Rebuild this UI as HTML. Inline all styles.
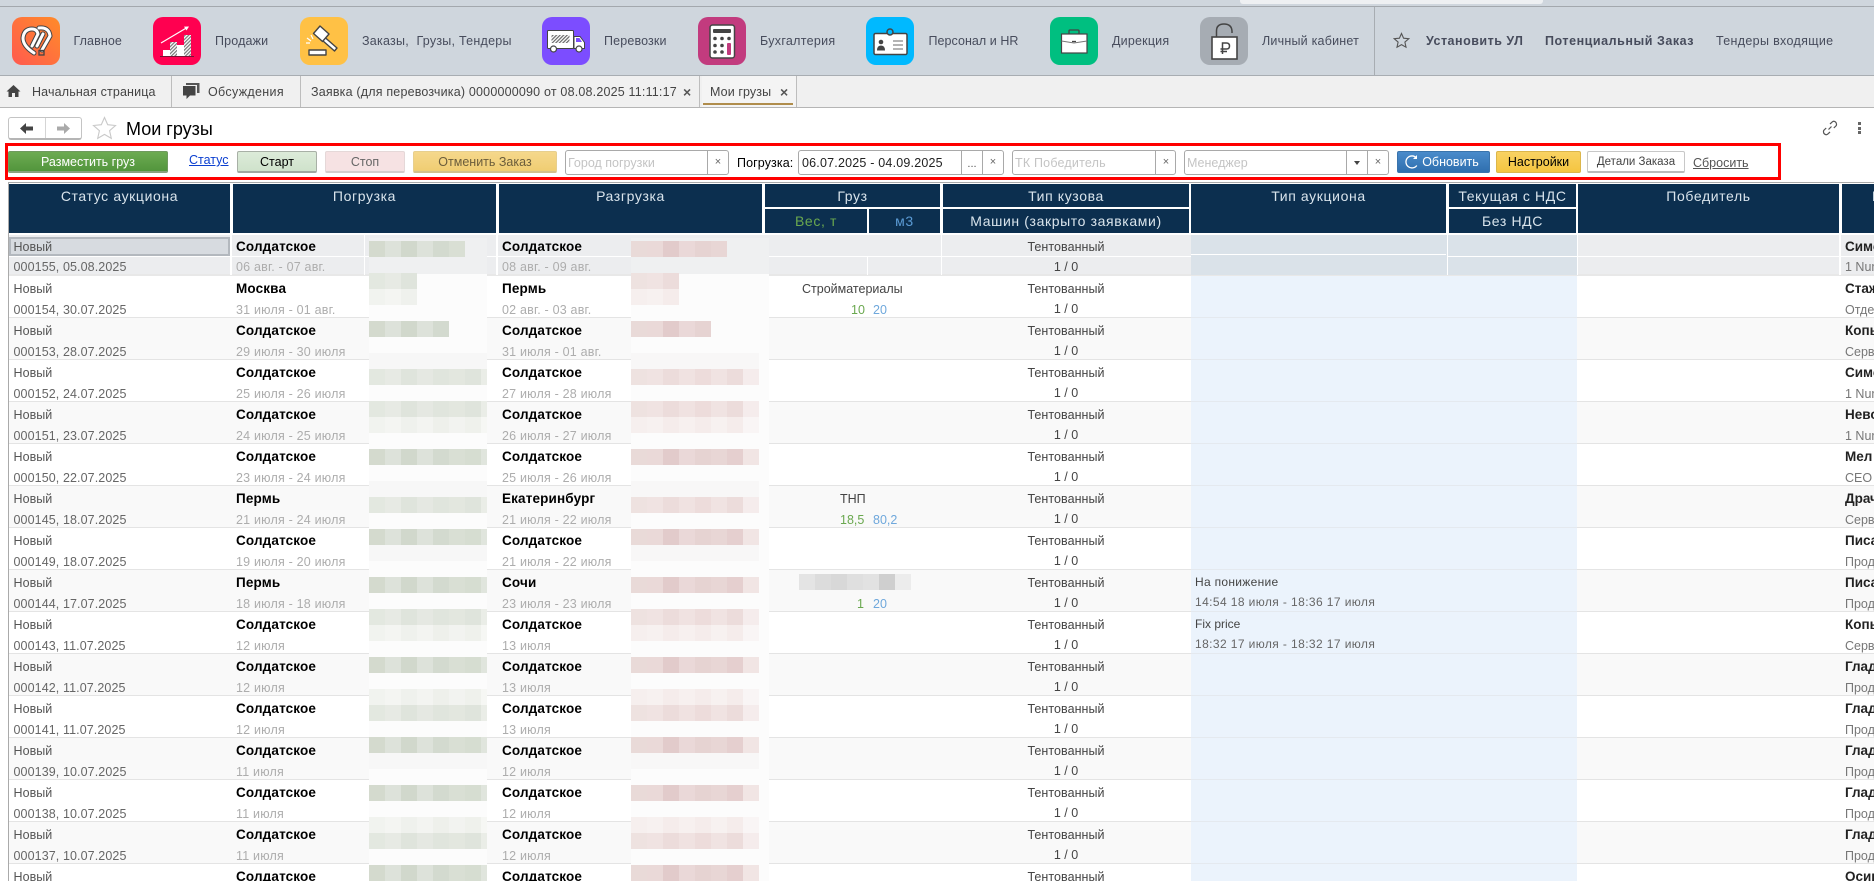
<!DOCTYPE html>
<html lang="ru"><head><meta charset="utf-8"><title>Мои грузы</title>
<style>
*{box-sizing:border-box}
html,body{margin:0;padding:0;width:1874px;height:881px;overflow:hidden;background:#fff;font-family:"Liberation Sans",Arial,sans-serif}
#app{position:relative;width:1874px;height:881px;overflow:hidden;background:#fff}
.a{position:absolute}
.t{position:absolute;white-space:nowrap}
#top{position:absolute;left:0;top:0;width:1874px;height:76px;background:#cfd6dd;border-bottom:1px solid #a8adb2}
#top:before{content:"";position:absolute;left:0;top:6px;width:1874px;height:1px;background:#a3a8ad}
.ic{position:absolute;top:17px;width:48px;height:48px}
.m{top:33px;font-size:12.5px;line-height:16px;color:#474c5c;letter-spacing:.05px}
#tabs{position:absolute;left:0;top:76px;width:1874px;height:32px;background:#f0f0f0;border-bottom:1px solid #b5b5b5}
.tb{top:84px;font-size:12.5px;line-height:16px;color:#444}
.dv{position:absolute;top:76px;width:1px;height:31px;background:#bdbdbd}
.btn{position:absolute;text-align:center;font-size:12.5px;height:22px;line-height:20px;border-radius:2px;white-space:nowrap}
.fld{position:absolute;top:150px;height:25px;border:1px solid #a9a9a9;border-radius:3px;background:#fff}
.ph{position:absolute;top:155px;font-size:12.5px;line-height:16px;color:#c4c4c4;white-space:nowrap}
.fd{position:absolute;top:150px;width:1px;height:25px;background:#a9a9a9}
.x{position:absolute;top:155px;font-size:11px;line-height:14px;color:#666;width:20px;text-align:center}
.h{position:absolute;background:#0c2f4f;color:#d9e4ec;font-size:14px;text-align:center;letter-spacing:.62px;padding-top:4px;line-height:16px;white-space:nowrap;overflow:hidden}
.r{position:absolute;left:9px;width:1865px;height:42px;background:#fff;border-bottom:1px solid #e4e4e4;overflow:hidden}
.g{background:#f9f9f9}
.r span{position:absolute;white-space:nowrap;font-size:12.5px;line-height:16px}
.s{left:4.500px;top:5px;color:#555;letter-spacing:.05px}
.n{left:4.500px;top:26px;color:#666;letter-spacing:.1px}
.p{left:227px;top:5px;font-weight:bold;color:#000;font-size:13.5px!important;letter-spacing:.15px}
.pd{left:227px;top:26px;color:#adadad;letter-spacing:.2px}
.u{left:493px;top:5px;font-weight:bold;color:#000;font-size:13.5px!important;letter-spacing:.15px}
.ud{left:493px;top:26px;color:#adadad;letter-spacing:.2px}
.k{left:934px;width:246px;top:5px;text-align:center;color:#444;letter-spacing:.05px}
.c{left:934px;width:246px;top:25px;text-align:center;color:#444}
.w{left:1836px;top:5px;font-weight:bold;color:#222;font-size:13.5px!important}
.j{left:1836px;top:26px;color:#777}
#blue{position:absolute;left:1191px;top:276px;width:386px;height:605px;background:repeating-linear-gradient(180deg,#ebf3fc 0 41px,#e4e9ef 41px 42px)}
.col{position:absolute;top:238px;height:643px}
.b1,.b2,.b3,.b4,.q1,.q2,.q3,.q4{position:absolute;height:16px;left:0}
.b1{width:118px;background:linear-gradient(90deg,#d4dace 0 16px,#dde2da 16px 32px,#d1d8cc 32px 48px,#dde2da 48px 64px,#d3dacf 64px 80px,#d9dfd4 80px 96px,#d6ddd1 96px 112px,#e0e5dd 112px)}
.b2{width:118px;background:linear-gradient(90deg,#e3e8e0 0 16px,#e7eae4 16px 32px,#dfe4dc 32px 48px,#e5e8e2 48px 64px,#e0e5dd 64px 80px,#e3e7df 80px 96px,#dfe4dc 96px 112px,#eaede7 112px)}
.b3{width:118px;background:linear-gradient(90deg,#f1f3ef 0 16px,#f4f5f2 16px 32px,#eff1ed 32px 48px,#f3f4f1 48px 64px,#eef0eb 64px 80px,#f2f3f0 80px 96px,#eff1ec 96px 112px,#f6f7f4 112px)}
.b4{width:118px;background:#f7f7f7}
.q1{width:128px;background:linear-gradient(90deg,#e9dad8 0 16px,#ead9d8 16px 32px,#e2cbcb 32px 48px,#ead8d8 48px 64px,#e6d3d2 64px 80px,#e8d6d5 80px 96px,#e5cfcf 96px 112px,#f1e5e4 112px)}
.q2{width:128px;background:linear-gradient(90deg,#eee2e0 0 16px,#f0e3e2 16px 32px,#ecdcdb 32px 48px,#f0e2e1 48px 64px,#eddcdb 64px 80px,#f0e3e2 80px 96px,#ecdcdb 96px 112px,#f5ecec 112px)}
.q3{width:128px;background:linear-gradient(90deg,#f6efee 0 16px,#f7f1f0 16px 32px,#f5eceb 32px 48px,#f7f0ef 48px 64px,#f5eceb 64px 80px,#f7f1f0 80px 96px,#f5eceb 96px 112px,#f9f5f5 112px)}
.q4{width:128px;background:#f8f7f7}
</style></head><body><div id="app">

<div id="top"></div>
<div class="a" style="left:1240px;top:0;width:303px;height:4px;background:#eef0f2;border-radius:0 0 3px 3px"></div>
<div class="a" style="left:1374px;top:7px;width:1px;height:68px;background:#a8adb2"></div>

<!-- 1 -->
<svg class="ic" style="left:12px" viewBox="0 0 48 48"><defs><linearGradient id="o" x1="1" y1="0" x2="0" y2="1"><stop offset="0" stop-color="#ff8b29"/><stop offset="1" stop-color="#ff5a4f"/></linearGradient></defs><rect width="48" height="48" rx="10" fill="url(#o)"/>
<g fill="none" stroke-linecap="round" stroke-linejoin="round"><path d="M22 36Q11 29 11 21Q12 12 20 12Q25 12 26 17L20 29" stroke="#444" stroke-width="5"/><path d="M27 11Q37 10 38 19L30 33M31 17 25 29" stroke="#444" stroke-width="5"/><path d="M22 36Q11 29 11 21Q12 12 20 12Q25 12 26 17L20 29" stroke="#fff" stroke-width="3"/><path d="M27 11Q37 10 38 19L30 33M31 17 25 29" stroke="#fff" stroke-width="3"/></g><rect x="27" y="33.500" width="5" height="4.500" fill="none" stroke="#444" stroke-width="1.300"/></svg>
<!-- 2 -->
<svg class="ic" style="left:153px" viewBox="0 0 48 48"><defs><pattern id="h1" width="2.500" height="2.500" patternUnits="userSpaceOnUse" patternTransform="rotate(45)"><rect width="2.500" height="2.500" fill="#fff"/><rect width="1.200" height="2.500" fill="#777"/></pattern></defs><rect width="48" height="48" rx="10" fill="#ff0050"/><rect x="10" y="33" width="7" height="6" fill="#fff"/><rect x="17" y="25" width="7" height="14" fill="url(#h1)"/><rect x="24" y="28" width="7" height="11" fill="#fff"/><rect x="31" y="18" width="7" height="21" fill="url(#h1)"/><path d="M7 39.500H41" stroke="#7a1234" stroke-width="1"/><path d="M8 26 35 10" stroke="#fff" stroke-width="1.200"/><path d="M36 9.500 31 9.600 33.500 13.500Z" fill="#fff"/></svg>
<!-- 3 -->
<svg class="ic" style="left:300px" viewBox="0 0 48 48"><rect width="48" height="48" rx="10" fill="#ffc145"/><g stroke="#444" stroke-width="1.400" stroke-linejoin="round"><path d="M21 17 37 31 34.500 34 18.500 20Z" fill="#fff"/><path d="M20 9 29 17 22.500 24.500 13.500 16.500Z" fill="#fff"/><rect x="9" y="33" width="17" height="5" fill="#fff"/></g><path d="M7 21 11 24M6 26H10M11 18 13 22" stroke="#fff" stroke-width="1.200"/></svg>
<!-- 4 -->
<svg class="ic" style="left:542px" viewBox="0 0 48 48"><defs><pattern id="h2" width="2.500" height="2.500" patternUnits="userSpaceOnUse" patternTransform="rotate(45)"><rect width="2.500" height="2.500" fill="#fff"/><rect width="1.200" height="2.500" fill="#666"/></pattern></defs><rect width="48" height="48" rx="10" fill="#7c4dff"/><rect x="5.500" y="13.500" width="26" height="18" rx="1" fill="#fff" stroke="#444"/><rect x="9.500" y="18" width="18" height="8" fill="url(#h2)"/><path d="M32 31.500V19.500H38L42.500 25.500V31.500Z" fill="#fff" stroke="#444"/><path d="M34 21H37.500L40 25H34Z" fill="#7c4dff"/><circle cx="11.500" cy="32" r="3" fill="#fff" stroke="#444" stroke-width="1.200"/><circle cx="37" cy="32" r="3" fill="#fff" stroke="#444" stroke-width="1.200"/></svg>
<!-- 5 -->
<svg class="ic" style="left:698px" viewBox="0 0 48 48"><rect width="48" height="48" rx="10" fill="#c23b7e"/><rect x="12" y="8" width="24.500" height="33" rx="2.500" fill="#fff" stroke="#444" stroke-width="1.500"/><rect x="15" y="12" width="18" height="4" rx="1" fill="#444"/><g fill="#444"><circle cx="17" cy="21.500" r="1.800"/><circle cx="24" cy="21.500" r="1.800"/><circle cx="31" cy="21.500" r="1.800"/><circle cx="17" cy="28.500" r="1.800"/><circle cx="24" cy="28.500" r="1.800"/><circle cx="17" cy="35" r="1.800"/><circle cx="24" cy="35" r="1.800"/></g><rect x="29" y="26" width="4" height="12" rx="1" fill="#c23b7e"/></svg>
<!-- 6 -->
<svg class="ic" style="left:866px" viewBox="0 0 48 48"><rect width="48" height="48" rx="10" fill="#00b9ff"/><rect x="8" y="16.500" width="33" height="21" rx="1.500" fill="#fff" stroke="#444" stroke-width="1.500"/><circle cx="24" cy="15" r="3" fill="#00b9ff" stroke="#444" stroke-width="1.500"/><circle cx="15" cy="25" r="2.300" fill="#444"/><path d="M11 33.500Q11 28.500 15 28.500T19 33.500Z" fill="#444"/><path d="M27 24H37M27 28H37M27 32H37" stroke="#888" stroke-width="1.200"/></svg>
<!-- 7 -->
<svg class="ic" style="left:1050px" viewBox="0 0 48 48"><rect width="48" height="48" rx="10" fill="#00bf80"/><path d="M19 17V14Q19 13 20 13H28Q29 13 29 14V17" fill="none" stroke="#444" stroke-width="1.300"/><rect x="11.500" y="17" width="25.500" height="19" fill="#fff" stroke="#444" stroke-width="1.200"/><path d="M11.500 24 24 26 37 24" fill="none" stroke="#777"/><path d="M22 24.500H26" stroke="#444" stroke-width="1.300"/></svg>
<!-- 8 -->
<svg class="ic" style="left:1200px" viewBox="0 0 48 48"><rect width="48" height="48" rx="10" fill="#a6acb3"/><path d="M16.500 20V14Q16.500 7 24 7T32 14V16" fill="none" stroke="#444" stroke-width="1.500"/><rect x="12" y="20" width="25" height="22" fill="#fff" stroke="#444" stroke-width="1.600"/><path d="M22.500 37V26H26.500Q29.500 26 29.500 29T26.500 32H20.500M20.500 34.500H27" fill="none" stroke="#444" stroke-width="1.500"/></svg>

<div class="t m" style="left:73.500px;letter-spacing:.1px">Главное</div>
<div class="t m" style="left:215px;letter-spacing:.15px">Продажи</div>
<div class="t m" style="left:362px;letter-spacing:.25px">Заказы,&nbsp; Грузы, Тендеры</div>
<div class="t m" style="left:604px;letter-spacing:.15px">Перевозки</div>
<div class="t m" style="left:760px;letter-spacing:.3px">Бухгалтерия</div>
<div class="t m" style="left:928.500px;letter-spacing:.05px">Персонал и HR</div>
<div class="t m" style="left:1112px;letter-spacing:.2px">Дирекция</div>
<div class="t m" style="left:1262px;letter-spacing:.22px">Личный кабинет</div>
<svg class="a" style="left:1393px;top:32px" width="17" height="17" viewBox="0 0 17 17"><path d="M8.500 1.500 10.600 6.200 15.800 6.700 11.900 10.100 13 15.200 8.500 12.600 4 15.200 5.100 10.100 1.200 6.700 6.400 6.200Z" fill="none" stroke="#555" stroke-width="1.100"/></svg>
<div class="t m" style="left:1426px;font-weight:bold;letter-spacing:.5px">Установить УЛ</div>
<div class="t m" style="left:1545px;font-weight:bold;letter-spacing:.55px">Потенциальный Заказ</div>
<div class="t m" style="left:1716px;letter-spacing:.33px">Тендеры входящие</div>

<div id="tabs"></div>
<div class="a" style="left:702px;top:76px;width:94px;height:31px;background:#f4f4f4"></div>
<svg class="a" style="left:6px;top:84px" width="15" height="14" viewBox="0 0 15 14"><path d="M7.500 1 14.500 7.500H12.500V13H9V9H6V13H2.500V7.500H.5Z" fill="#444"/></svg>
<svg class="a" style="left:182px;top:83px" width="18" height="17" viewBox="0 0 18 17"><path d="M4 0H17.500V10H15V2H4Z" fill="#555"/><path d="M1 3H13.500V12.500H8L4.500 16V12.500H1Z" fill="#444"/></svg>
<div class="t tb" style="left:32px;letter-spacing:.15px">Начальная страница</div>
<div class="dv" style="left:171px"></div>
<div class="t tb" style="left:208px;letter-spacing:.33px">Обсуждения</div>
<div class="dv" style="left:300px"></div>
<div class="t tb" style="left:311px;letter-spacing:.19px">Заявка (для перевозчика) 0000000090 от 08.08.2025 11:11:17</div>
<div class="t tb" style="left:683px;font-weight:bold;font-size:14px;color:#555">×</div>
<div class="dv" style="left:699px"></div>
<div class="t tb" style="left:710px;letter-spacing:.1px">Мои грузы</div>
<div class="t tb" style="left:780px;font-weight:bold;font-size:14px;color:#555">×</div>
<div class="dv" style="left:796px"></div>
<div class="a" style="left:703px;top:103px;width:90px;height:2px;background:#b08d4c"></div>

<!-- title row -->
<div class="a" style="left:8px;top:117px;width:74px;height:23px;border:1px solid #c4c4c4;border-bottom:2px solid #b5b5b5;border-radius:3px;background:#fff"></div>
<div class="a" style="left:45px;top:118px;width:1px;height:20px;background:#d5d5d5"></div>
<svg class="a" style="left:19px;top:122px" width="15" height="13" viewBox="0 0 15 13"><path d="M1 6.500 7 1V4.500H14V8.500H7V12Z" fill="#444"/></svg>
<svg class="a" style="left:56px;top:122px" width="15" height="13" viewBox="0 0 15 13"><path d="M14 6.500 8 1V4.500H1V8.500H8V12Z" fill="#aaa"/></svg>
<svg class="a" style="left:92px;top:116px" width="25" height="24" viewBox="0 0 25 24"><path d="M12.500 1.500 15.700 8.700 23.500 9.500 17.600 14.700 19.300 22.400 12.500 18.400 5.700 22.400 7.400 14.700 1.500 9.500 9.300 8.700Z" fill="none" stroke="#c9c9c9" stroke-width="1.100"/></svg>
<div class="t" style="left:126px;top:118px;font-size:18px;line-height:22px;color:#000">Мои грузы</div>
<svg class="a" style="left:1822px;top:120px" width="16" height="16" viewBox="0 0 16 16"><g fill="none" stroke="#555" stroke-width="1.200"><path d="M6.500 9.500 9.500 6.500"/><path d="M8 4 10.500 1.700Q12 .7 13.500 2T14.300 5.500L11.800 8"/><path d="M8 12 5.500 14.300Q4 15.300 2.500 14T1.700 10.500L4.200 8"/></g></svg>
<div class="a" style="left:1858px;top:122px;width:3px;height:3px;background:#666"></div>
<div class="a" style="left:1858px;top:126.500px;width:3px;height:3px;background:#666"></div>
<div class="a" style="left:1858px;top:131px;width:3px;height:3px;background:#666"></div>

<!-- red rectangle -->
<div class="a" style="left:5px;top:143px;width:1776px;height:37px;border:3px solid #f00"></div>

<div class="btn" style="left:8px;top:151px;width:160px;color:#fff;background:linear-gradient(#6dab52,#52953c);border:1px solid #6f9a5e;border-bottom:2px solid #8aa17f">Разместить груз</div>
<div class="t" style="left:189px;top:152px;font-size:12.5px;line-height:16px;color:#0b3fd0;text-decoration:underline">Статус</div>
<div class="btn" style="left:237px;top:151px;width:80px;color:#000;background:linear-gradient(#dcebd9,#cfe2cb);border:1px solid #a8b0a6;border-bottom:2px solid #a0a8a0">Старт</div>
<div class="btn" style="left:325px;top:151px;width:80px;color:#666;background:#f6e2e3;border:1px solid #e5d8d8;border-bottom:2px solid #d5cccc">Стоп</div>
<div class="btn" style="left:413px;top:151px;width:144px;color:#6b5d3b;background:linear-gradient(#f5d88c,#f0cd72);border:1px solid #e7cf8e;border-bottom:2px solid #d3c08c">Отменить Заказ</div>

<div class="fld" style="left:565px;width:164px"></div><div class="fd" style="left:707px"></div>
<div class="ph" style="left:568px">Город погрузки</div><div class="x" style="left:708px">×</div>
<div class="t" style="left:737px;top:155px;font-size:12.5px;line-height:16px;color:#000;letter-spacing:.1px">Погрузка:</div>
<div class="fld" style="left:798px;width:206px"></div><div class="fd" style="left:961px"></div><div class="fd" style="left:982px"></div>
<div class="t" style="left:802px;top:155px;font-size:12.5px;line-height:16px;color:#222;letter-spacing:.2px">06.07.2025 - 04.09.2025</div>
<div class="x" style="left:962px;top:157px;color:#555">...</div><div class="x" style="left:983px">×</div>
<div class="fld" style="left:1012px;width:164px"></div><div class="fd" style="left:1155px"></div>
<div class="ph" style="left:1015px;letter-spacing:.2px">ТК Победитель</div><div class="x" style="left:1156px">×</div>
<div class="fld" style="left:1184px;width:205px"></div><div class="fd" style="left:1346px"></div><div class="fd" style="left:1367px"></div>
<div class="ph" style="left:1187px">Менеджер</div>
<div class="a" style="left:1354px;top:161px;border:3.500px solid transparent;border-top:4px solid #444;border-bottom:0"></div>
<div class="x" style="left:1368px">×</div>

<div class="btn" style="left:1397px;top:151px;width:93px;color:#fff;background:linear-gradient(#4a8bcb,#2f6fae);border:1px solid #3a74ac;padding-left:14px">Обновить</div>
<svg class="a" style="left:1404px;top:154px" width="15" height="16" viewBox="0 0 15 16"><path d="M12.500 4A6 6 0 1 0 12.800 11.500" fill="none" stroke="#fff" stroke-width="1.300"/><path d="M13 1V5H9Z" fill="#fff"/></svg>
<div class="btn" style="left:1496px;top:151px;width:85px;color:#000;background:linear-gradient(#f9d263,#f5c540);border:1px solid #dcb64b">Настройки</div>
<div class="btn" style="left:1587px;top:151px;width:98px;color:#444;background:#fff;border:1px solid #c8c8c8;border-bottom:2px solid #bbb;font-size:11.500px">Детали Заказа</div>
<div class="t" style="left:1693px;top:155px;font-size:12.5px;line-height:16px;color:#555;text-decoration:underline">Сбросить</div>

<!-- table frame -->
<div class="a" style="left:8px;top:182px;width:1866px;height:1px;background:#aaa"></div>
<div class="a" style="left:8px;top:182px;width:1px;height:699px;background:#aaa"></div>

<!-- header -->
<div class="h" style="left:9px;top:184px;width:221px;height:49px">Статус аукциона</div>
<div class="h" style="left:233px;top:184px;width:263px;height:49px">Погрузка</div>
<div class="h" style="left:499px;top:184px;width:263px;height:49px">Разгрузка</div>
<div class="h" style="left:765px;top:184px;width:175px;height:23px">Груз</div>
<div class="h" style="left:765px;top:209px;width:102px;height:24px;color:#6aa84f">Вес, т</div>
<div class="h" style="left:869px;top:209px;width:71px;height:24px;color:#5b9bd5">м3</div>
<div class="h" style="left:943px;top:184px;width:246px;height:23px">Тип кузова</div>
<div class="h" style="left:943px;top:209px;width:246px;height:24px">Машин (закрыто заявками)</div>
<div class="h" style="left:1191px;top:184px;width:255px;height:49px">Тип аукциона</div>
<div class="h" style="left:1449px;top:184px;width:127px;height:23px">Текущая с НДС</div>
<div class="h" style="left:1449px;top:209px;width:127px;height:24px">Без НДС</div>
<div class="h" style="left:1578px;top:184px;width:261px;height:49px">Победитель</div>
<div class="h" style="left:1842px;top:184px;width:32px;height:49px;text-align:left;padding-left:30px">М</div>

<!-- rows -->
<div class="r" style="top:235px;height:41px;background:#ecedef;border-bottom:2px solid #e8e8e8">
<span class="s" style="top:4px">Новый</span><span class="n" style="top:24px">000155, 05.08.2025</span>
<span class="p" style="top:4px">Солдатское</span><span class="pd" style="top:24px">06 авг. - 07 авг.</span>
<span class="u" style="top:4px">Солдатское</span><span class="ud" style="top:24px">08 авг. - 09 авг.</span>
<span class="k" style="top:4px">Тентованный</span><span class="c" style="top:24px">1 / 0</span>
<span class="w" style="top:4px">Симо</span><span class="j" style="top:24px">1 Num</span></div>
<div class="r" style="top:276px"><span class="s">Новый</span><span class="n">000154, 30.07.2025</span><span class="p">Москва</span><span class="pd">31 июля - 01 авг.</span><span class="u">Пермь</span><span class="ud">02 авг. - 03 авг.</span><span class="k">Тентованный</span><span class="c">1 / 0</span><span class="w">Стаж</span><span class="j">Отде</span></div>
<div class="r g" style="top:318px"><span class="s">Новый</span><span class="n">000153, 28.07.2025</span><span class="p">Солдатское</span><span class="pd">29 июля - 30 июля</span><span class="u">Солдатское</span><span class="ud">31 июля - 01 авг.</span><span class="k">Тентованный</span><span class="c">1 / 0</span><span class="w">Копь</span><span class="j">Серв</span></div>
<div class="r" style="top:360px"><span class="s">Новый</span><span class="n">000152, 24.07.2025</span><span class="p">Солдатское</span><span class="pd">25 июля - 26 июля</span><span class="u">Солдатское</span><span class="ud">27 июля - 28 июля</span><span class="k">Тентованный</span><span class="c">1 / 0</span><span class="w">Симо</span><span class="j">1 Num</span></div>
<div class="r g" style="top:402px"><span class="s">Новый</span><span class="n">000151, 23.07.2025</span><span class="p">Солдатское</span><span class="pd">24 июля - 25 июля</span><span class="u">Солдатское</span><span class="ud">26 июля - 27 июля</span><span class="k">Тентованный</span><span class="c">1 / 0</span><span class="w">Нево</span><span class="j">1 Num</span></div>
<div class="r" style="top:444px"><span class="s">Новый</span><span class="n">000150, 22.07.2025</span><span class="p">Солдатское</span><span class="pd">23 июля - 24 июля</span><span class="u">Солдатское</span><span class="ud">25 июля - 26 июля</span><span class="k">Тентованный</span><span class="c">1 / 0</span><span class="w">Мел</span><span class="j">CEO</span></div>
<div class="r g" style="top:486px"><span class="s">Новый</span><span class="n">000145, 18.07.2025</span><span class="p">Пермь</span><span class="pd">21 июля - 24 июля</span><span class="u">Екатеринбург</span><span class="ud">21 июля - 22 июля</span><span class="k">Тентованный</span><span class="c">1 / 0</span><span class="w">Драч</span><span class="j">Серв</span></div>
<div class="r" style="top:528px"><span class="s">Новый</span><span class="n">000149, 18.07.2025</span><span class="p">Солдатское</span><span class="pd">19 июля - 20 июля</span><span class="u">Солдатское</span><span class="ud">21 июля - 22 июля</span><span class="k">Тентованный</span><span class="c">1 / 0</span><span class="w">Писа</span><span class="j">Прод</span></div>
<div class="r g" style="top:570px"><span class="s">Новый</span><span class="n">000144, 17.07.2025</span><span class="p">Пермь</span><span class="pd">18 июля - 18 июля</span><span class="u">Сочи</span><span class="ud">23 июля - 23 июля</span><span class="k">Тентованный</span><span class="c">1 / 0</span><span class="w">Писа</span><span class="j">Прод</span></div>
<div class="r" style="top:612px"><span class="s">Новый</span><span class="n">000143, 11.07.2025</span><span class="p">Солдатское</span><span class="pd">12 июля</span><span class="u">Солдатское</span><span class="ud">13 июля</span><span class="k">Тентованный</span><span class="c">1 / 0</span><span class="w">Копь</span><span class="j">Серв</span></div>
<div class="r g" style="top:654px"><span class="s">Новый</span><span class="n">000142, 11.07.2025</span><span class="p">Солдатское</span><span class="pd">12 июля</span><span class="u">Солдатское</span><span class="ud">13 июля</span><span class="k">Тентованный</span><span class="c">1 / 0</span><span class="w">Глад</span><span class="j">Прод</span></div>
<div class="r" style="top:696px"><span class="s">Новый</span><span class="n">000141, 11.07.2025</span><span class="p">Солдатское</span><span class="pd">12 июля</span><span class="u">Солдатское</span><span class="ud">13 июля</span><span class="k">Тентованный</span><span class="c">1 / 0</span><span class="w">Глад</span><span class="j">Прод</span></div>
<div class="r g" style="top:738px"><span class="s">Новый</span><span class="n">000139, 10.07.2025</span><span class="p">Солдатское</span><span class="pd">11 июля</span><span class="u">Солдатское</span><span class="ud">12 июля</span><span class="k">Тентованный</span><span class="c">1 / 0</span><span class="w">Глад</span><span class="j">Прод</span></div>
<div class="r" style="top:780px"><span class="s">Новый</span><span class="n">000138, 10.07.2025</span><span class="p">Солдатское</span><span class="pd">11 июля</span><span class="u">Солдатское</span><span class="ud">12 июля</span><span class="k">Тентованный</span><span class="c">1 / 0</span><span class="w">Глад</span><span class="j">Прод</span></div>
<div class="r g" style="top:822px"><span class="s">Новый</span><span class="n">000137, 10.07.2025</span><span class="p">Солдатское</span><span class="pd">11 июля</span><span class="u">Солдатское</span><span class="ud">12 июля</span><span class="k">Тентованный</span><span class="c">1 / 0</span><span class="w">Глад</span><span class="j">Прод</span></div>
<div class="r" style="top:864px;height:17px;border-bottom:0"><span class="s">Новый</span><span class="p">Солдатское</span><span class="u">Солдатское</span><span class="k">Тентованный</span><span class="w">Осин</span></div>

<!-- blue columns -->
<div id="blue"></div>
<div class="a" style="left:1191px;top:235px;width:386px;height:40px;background:#dae2e9"></div>
<div class="a" style="left:1191px;top:254px;width:255px;height:1px;background:#fff"></div>
<div class="a" style="left:1447px;top:256px;width:130px;height:1px;background:#fff"></div>
<div class="a" style="left:1447px;top:235px;width:1px;height:40px;background:#fff"></div>
<div class="a" style="left:1577px;top:235px;width:1px;height:40px;background:#fff"></div>
<!-- first row selection and separators -->
<div class="a" style="left:9px;top:256px;width:1182px;height:1px;background:#fff"></div>
<div class="a" style="left:1578px;top:256px;width:296px;height:1px;background:#fff"></div>
<div class="a" style="left:230px;top:235px;width:2px;height:40px;background:#fff"></div>
<div class="a" style="left:364px;top:235px;width:1px;height:40px;background:#fff"></div>
<div class="a" style="left:496px;top:235px;width:2px;height:40px;background:#fff"></div>
<div class="a" style="left:867px;top:257px;width:1px;height:18px;background:#fff"></div>
<div class="a" style="left:941px;top:235px;width:1px;height:40px;background:#fff"></div>
<div class="a" style="left:1839px;top:235px;width:2px;height:40px;background:#fff"></div>
<div class="a" style="left:9px;top:237px;width:221px;height:19px;background:#d7dbe0;border:2px solid #b3b8be"></div>
<div class="t" style="left:13.500px;top:239px;font-size:12.5px;line-height:16px;color:#555">Новый</div>

<!-- cargo and auction text -->
<div class="t" style="left:802px;top:281px;font-size:12.5px;line-height:16px;color:#444">Стройматериалы</div>
<div class="t" style="left:851px;top:302px;font-size:12.5px;line-height:16px;color:#6aa84f">10</div>
<div class="t" style="left:873px;top:302px;font-size:12.5px;line-height:16px;color:#6fa8dc">20</div>
<div class="t" style="left:840px;top:491px;font-size:12.5px;line-height:16px;color:#444">ТНП</div>
<div class="t" style="left:840px;top:512px;font-size:12.5px;line-height:16px;color:#6aa84f">18,5</div>
<div class="t" style="left:873px;top:512px;font-size:12.5px;line-height:16px;color:#6fa8dc">80,2</div>
<div class="a" style="left:799px;top:574px;width:112px;height:16px;background:linear-gradient(90deg,#e4e4e4 0 16px,#dcdcdc 16px 32px,#d8d8d8 32px 48px,#dfdfdf 48px 64px,#e2e2e2 64px 80px,#cfcfcf 80px 96px,#ececec 96px)"></div>
<div class="t" style="left:857px;top:596px;font-size:12.5px;line-height:16px;color:#6aa84f">1</div>
<div class="t" style="left:873px;top:596px;font-size:12.5px;line-height:16px;color:#6fa8dc">20</div>
<div class="t" style="left:1195px;top:574px;font-size:12px;line-height:16px;color:#444;letter-spacing:.3px">На понижение</div>
<div class="t" style="left:1195px;top:594px;font-size:12px;line-height:16px;color:#666;letter-spacing:.4px">14:54 18 июля - 18:36 17 июля</div>
<div class="t" style="left:1195px;top:616px;font-size:12px;line-height:16px;color:#444">Fix price</div>
<div class="t" style="left:1195px;top:636px;font-size:12px;line-height:16px;color:#666;letter-spacing:.4px">18:32 17 июля - 18:32 17 июля</div>

<!-- pixelated columns -->
<div class="col" style="left:369px;width:118px;background:#fcfcfc;overflow:hidden">
<div style="position:absolute;left:0;top:0;width:118px;height:36px;background:#eff0f1"></div>
<div class="b1" style="top:2.670px;width:96px"></div>
<div class="b2" style="top:34.670px;width:48px"></div><div class="b3" style="top:50.670px;width:48px"></div>
<div class="b1" style="top:82.670px;width:80px"></div>
<div class="b4" style="top:114.670px"></div><div class="b2" style="top:130.670px"></div>
<div class="b2" style="top:162.670px"></div><div class="b3" style="top:178.670px"></div>
<div class="b1" style="top:210.670px"></div>
<div class="b4" style="top:242.670px"></div><div class="b2" style="top:258.670px"></div>
<div class="b1" style="top:290.670px"></div><div class="b4" style="top:306.670px"></div>
<div class="b1" style="top:338.670px"></div>
<div class="b2" style="top:370.670px"></div><div class="b3" style="top:386.670px"></div>
<div class="b1" style="top:418.670px"></div>
<div class="b3" style="top:450.670px"></div><div class="b2" style="top:466.670px"></div>
<div class="b1" style="top:498.670px"></div><div class="b4" style="top:514.670px"></div>
<div class="b1" style="top:546.670px"></div>
<div class="b3" style="top:578.670px"></div><div class="b2" style="top:594.670px"></div>
<div class="b1" style="top:626.670px"></div>
</div>
<div class="col" style="left:631px;width:138px;background:#fcfcfc;overflow:hidden">
<div style="position:absolute;left:0;top:0;width:138px;height:36px;background:#eff0f1"></div>
<div class="q1" style="top:2.670px;width:96px"></div>
<div class="q2" style="top:34.670px;width:48px"></div><div class="q3" style="top:50.670px;width:48px"></div>
<div class="q1" style="top:82.670px;width:80px"></div>
<div class="q4" style="top:114.670px"></div><div class="q2" style="top:130.670px"></div>
<div class="q2" style="top:162.670px"></div><div class="q3" style="top:178.670px"></div>
<div class="q1" style="top:210.670px"></div>
<div class="q4" style="top:242.670px"></div><div class="q2" style="top:258.670px"></div>
<div class="q1" style="top:290.670px"></div><div class="q4" style="top:306.670px"></div>
<div class="q1" style="top:338.670px"></div>
<div class="q2" style="top:370.670px"></div><div class="q3" style="top:386.670px"></div>
<div class="q1" style="top:418.670px"></div>
<div class="q3" style="top:450.670px"></div><div class="q2" style="top:466.670px"></div>
<div class="q1" style="top:498.670px"></div><div class="q4" style="top:514.670px"></div>
<div class="q1" style="top:546.670px"></div>
<div class="q3" style="top:578.670px"></div><div class="q2" style="top:594.670px"></div>
<div class="q1" style="top:626.670px"></div>
</div>
</div></body></html>
